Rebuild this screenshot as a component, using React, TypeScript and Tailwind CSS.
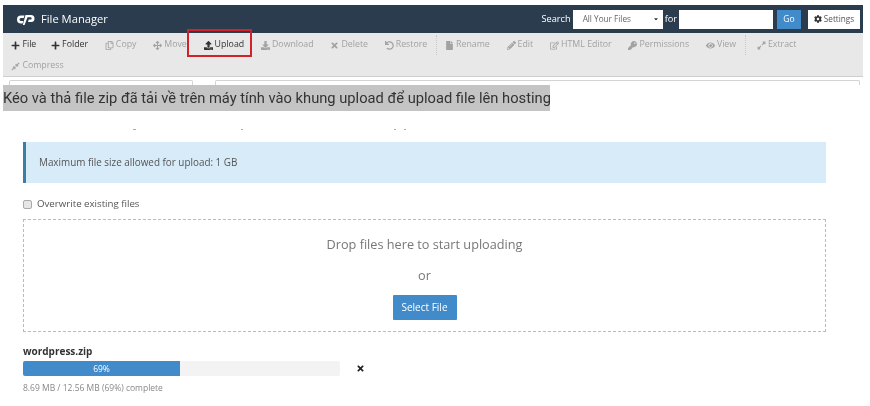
import {
  FaPlus, FaRegCopy, FaArrowsAlt, FaUpload, FaDownload, FaTimes, FaUndo, FaFile,
  FaPencilAlt, FaRegEdit, FaKey, FaEye, FaExpandAlt, FaCompressAlt, FaCog, FaCaretDown,
} from "react-icons/fa";
import type { IconType } from "react-icons";

const ROW_ONE: { label: string; icon: IconType; active?: boolean; extra?: string }[] = [
  { label: "File", icon: FaPlus, active: true, extra: "-mr-[2px]" },
  { label: "Folder", icon: FaPlus, active: true },
  { label: "Copy", icon: FaRegCopy },
  { label: "Move", icon: FaArrowsAlt },
  { label: "Upload", icon: FaUpload, active: true },
  { label: "Download", icon: FaDownload },
  { label: "Delete", icon: FaTimes },
  { label: "Restore", icon: FaUndo, extra: "border-r border-dotted border-[#c8c8c8]" },
  { label: "Rename", icon: FaFile },
  { label: "Edit", icon: FaPencilAlt },
  { label: "HTML Editor", icon: FaRegEdit },
  { label: "Permissions", icon: FaKey },
  { label: "View", icon: FaEye, extra: "border-r border-dotted border-[#c8c8c8] mr-[3px]" },
  { label: "Extract", icon: FaExpandAlt },
];

function ToolItem({ label, icon: Icon, active }: { label: string; icon: IconType; active?: boolean }) {
  return (
    <span className={`flex items-center gap-[2px] px-[8.4px] whitespace-nowrap ${active ? "text-[#333333]" : "text-[#a2a2a2]"}`}>
      <Icon className="w-[9px] h-[9px]" />
      {label}
    </span>
  );
}

export default function App() {
  return (
    <div className="relative w-[870px] h-[406px] overflow-hidden bg-white pt-[5px] font-['Open_Sans',sans-serif] blur-[0.4px]">
      <div className="w-[860px] ml-[3px]">
        {/* top bar */}
        <header className="h-[28px] bg-[#2a3c4e] flex items-center pl-[13px] pr-[3px] text-white">
          <svg viewBox="0 0 19 11" className="w-[19px] h-[11px]" fill="white">
            <path d="M8.5 1.5H5a4 4 0 0 0 0 8h1.5L7.5 7H5a1.5 1.5 0 0 1 0-3h2.7z" />
            <path d="M9.5 1H15a3.5 3.5 0 0 1 0 7h-3l.8-2.4h2a1.2 1.2 0 0 0 0-2.3h-3.3L8.6 11H6.8z" />
          </svg>
          <span className="ml-[6px] text-[11.2px]">File Manager</span>
          <div className="ml-auto flex items-center text-[9.2px]">
            <span>Search</span>
            <span className="ml-[2px] w-[90px] h-[19px] shrink-0 bg-white text-[#666666] text-[8.2px] flex items-center justify-between pl-[10px] pr-[4px]">
              All Your Files
              <FaCaretDown className="w-[6px] h-[6px] text-[#333333]" />
            </span>
            <span className="ml-[2px]">for</span>
            <span className="ml-[2px] w-[94px] h-[19px] shrink-0 bg-white" />
            <span className="ml-[4px] w-[24px] h-[19px] shrink-0 bg-[#428bca] text-[8.5px] flex items-center justify-center">Go</span>
            <span className="ml-[7px] w-[52px] h-[19px] shrink-0 bg-white text-[#555555] text-[8.2px] flex items-center justify-center gap-[2px]">
              <FaCog className="w-[8px] h-[8px] text-[#333333]" />
              Settings
            </span>
          </div>
        </header>

        {/* toolbar */}
        <div className="h-[44px] bg-[#e8e8e8] border-b border-[#cfcfcf] text-[8.8px] pt-[6px]">
          <div className="flex items-center h-[12px]">
            {ROW_ONE.map((item) => (
              <div key={item.label} className={`flex items-center h-[20px] ${item.extra ?? ""}`}>
                <ToolItem label={item.label} icon={item.icon} active={item.active} />
              </div>
            ))}
          </div>
          <div className="flex items-center h-[12px] mt-[9px]">
            <ToolItem label="Compress" icon={FaCompressAlt} />
          </div>
        </div>

        {/* clipped path bar behind the caption */}
        <div className="h-[8px] flex items-start pt-[3px] pl-[6px] gap-[22px]">
          <span className="w-[184px] h-[5px] border-t border-x border-[#d4d4d4] rounded-t-[2px]" />
          <span className="w-[645px] h-[5px] border-t border-x border-[#d4d4d4] rounded-t-[2px]" />
        </div>
      </div>

      {/* caption */}
      <div className="w-[547px] h-[26px] ml-[3px] bg-[#c4c4c4] text-[#333333] text-[14.7px] leading-[26px] whitespace-nowrap font-['Roboto',sans-serif]">
        Kéo và thả file zip đã tải về trên máy tính vào khung upload để upload file lên hosting
      </div>

      {/* tops of a line of text cut off by the caption crop */}
      <div className="h-[31px] pt-[18px] flex items-start">
        <span className="ml-[133px] w-[3px] h-[1px] bg-[#aaaaaa]" />
        <span className="ml-[105px] w-[2px] h-[1px] bg-[#aaaaaa]" />
        <span className="ml-[151px] w-[2px] h-[1px] bg-[#aaaaaa]" />
        <span className="ml-[8px] w-[2px] h-[1px] bg-[#aaaaaa]" />
      </div>

      {/* upload page */}
      <main className="w-[803px] ml-[23px] text-[#555555]">
        <div className="h-[41px] bg-[#d7ebf9] border-l-[3px] border-[#3b7ea8] pl-[13px] flex items-center text-[9.9px]">
          Maximum file size allowed for upload: 1 GB
        </div>
        <label className="h-[12px] mt-[15px] flex items-center gap-[5px] text-[9.7px]">
          <span className="w-[9px] h-[9px] rounded-[2px] bg-[#e6e6e6] border border-[#aaaaaa]" />
          Overwrite existing files
        </label>
        <div className="h-[113px] mt-[9px] border border-dashed border-[#bbbbbb] flex flex-col items-center">
          <p className="mt-[15px] text-[12.7px] leading-[18px] text-[#777777]">Drop files here to start uploading</p>
          <p className="mt-[13px] text-[12.7px] leading-[18px] text-[#777777]">or</p>
          <button className="mt-[11px] w-[64px] h-[25px] bg-[#428bca] text-white text-[10px] rounded-[1px]">Select File</button>
        </div>
        <p className="mt-[13px] h-[12px] leading-[12px] text-[10px] font-bold text-[#333333]">wordpress.zip</p>
        <div className="mt-[4px] flex items-center">
          <div className="w-[317px] h-[15px] bg-[#f3f3f3] rounded-[2px] overflow-hidden">
            <div className="w-[157px] h-full bg-[#428bca] text-white text-[8.5px] leading-[15px] text-center">69%</div>
          </div>
          <FaTimes className="ml-[16px] w-[9px] h-[9px] text-[#222222]" />
        </div>
        <p className="mt-[7px] text-[8.5px] leading-[10px] text-[#888888]">8.69 MB / 12.56 MB (69%) complete</p>
      </main>

      {/* red highlight around Upload */}
      <div className="absolute left-[187px] top-[29px] w-[65px] h-[28px] border-2 border-[#d3212c]" />
    </div>
  );
}
